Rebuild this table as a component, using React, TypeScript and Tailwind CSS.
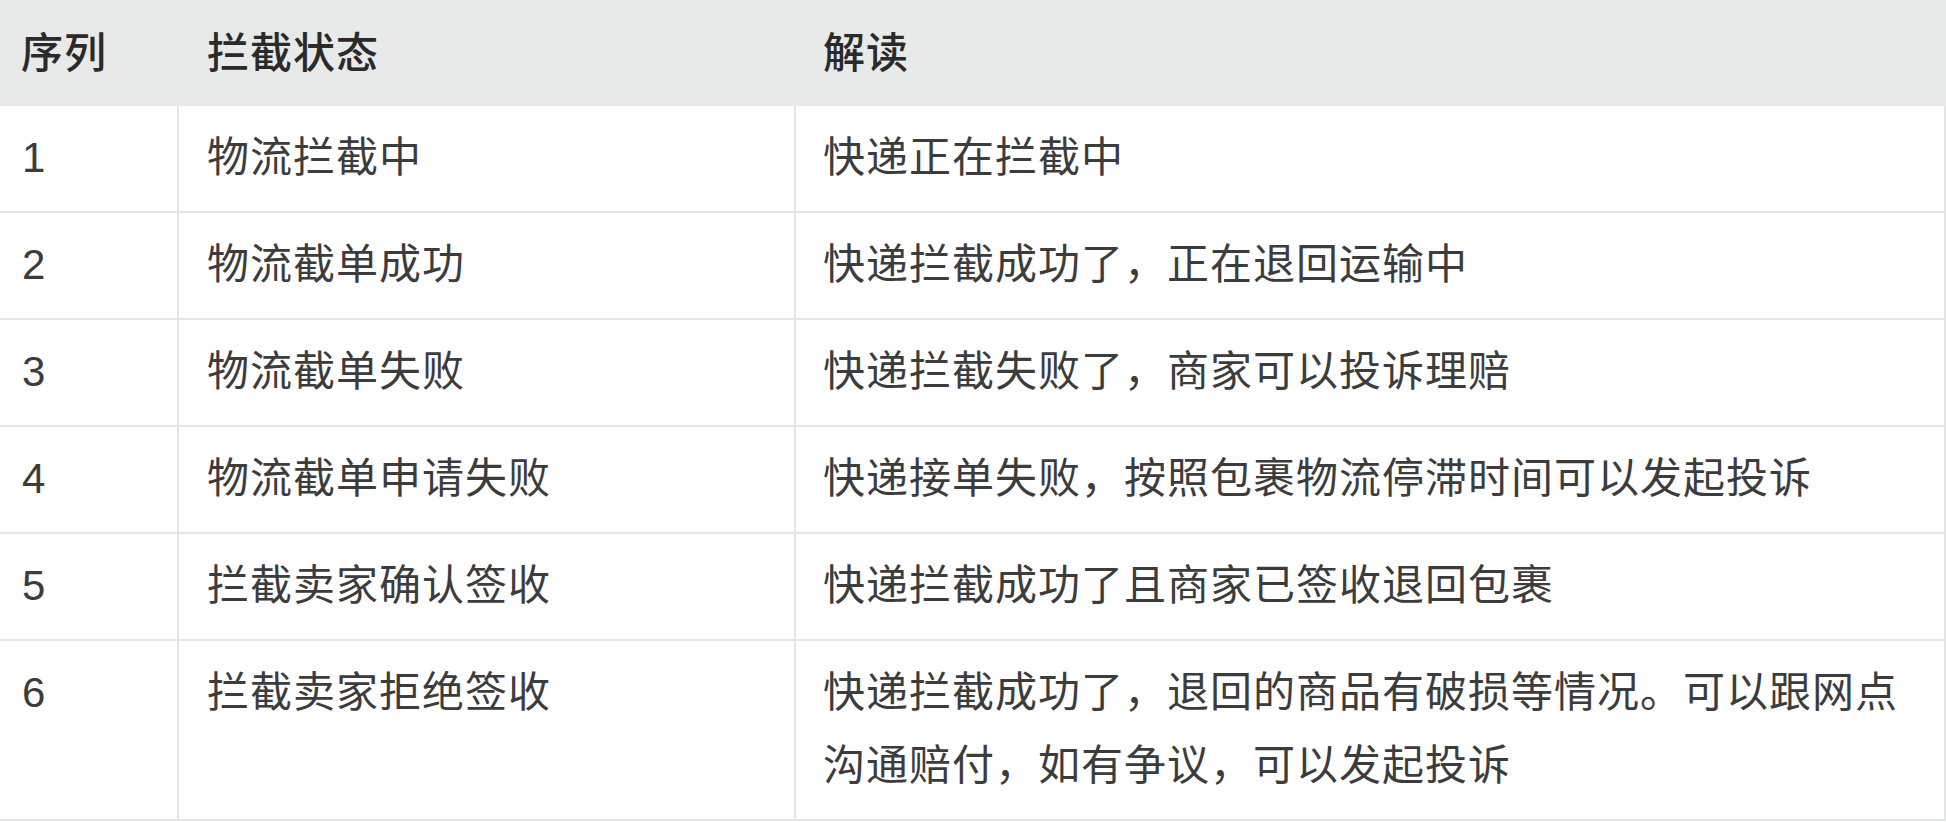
import React from 'react';

const rows = [
  { id: '1', status: '物流拦截中', note: '快递正在拦截中' },
  { id: '2', status: '物流截单成功', note: '快递拦截成功了，正在退回运输中' },
  { id: '3', status: '物流截单失败', note: '快递拦截失败了，商家可以投诉理赔' },
  { id: '4', status: '物流截单申请失败', note: '快递接单失败，按照包裹物流停滞时间可以发起投诉' },
  { id: '5', status: '拦截卖家确认签收', note: '快递拦截成功了且商家已签收退回包裹' },
  { id: '6', status: '拦截卖家拒绝签收', note: '快递拦截成功了，退回的商品有破损等情况。可以跟网点沟通赔付，如有争议，可以发起投诉' },
];

export default function App() {
  return (
    <main
      className="w-[1946px] h-[822px] overflow-hidden bg-white text-[42px] tracking-[1px] leading-[73px]"
      style={{ fontFamily: '"Liberation Sans", "Noto Sans CJK SC", sans-serif' }}
    >
      {/* 表头 */}
      <div className="grid grid-cols-[177px_617px_1fr] h-[106px] items-center bg-[#e8e9e9] text-[#2a2a2a] font-medium">
        <div className="pl-[21px]">序列</div>
        <div className="pl-[30px]">拦截状态</div>
        <div className="pl-[29px]">解读</div>
      </div>

      {/* 明细 */}
      <div className="border-r-2 border-[#e4e6e6] text-[#3c3c3c]">
        {rows.map((r, i) => (
          <div
            key={r.id}
            className={`grid grid-cols-[177px_617px_1fr] ${i > 0 ? 'border-t-2' : ''} ${i === rows.length - 1 ? 'border-b-2' : ''} border-[#e4e6e6]`}
          >
            <div className="pl-[22px] pt-[15px] pb-[17px]">{r.id}</div>
            <div className="pl-[28px] pt-[15px] pb-[17px] border-l-2 border-[#e4e6e6]">{r.status}</div>
            <div className="pl-[27px] pr-[20px] pt-[15px] pb-[17px] border-l-2 border-[#e4e6e6]">{r.note}</div>
          </div>
        ))}
      </div>
    </main>
  );
}
